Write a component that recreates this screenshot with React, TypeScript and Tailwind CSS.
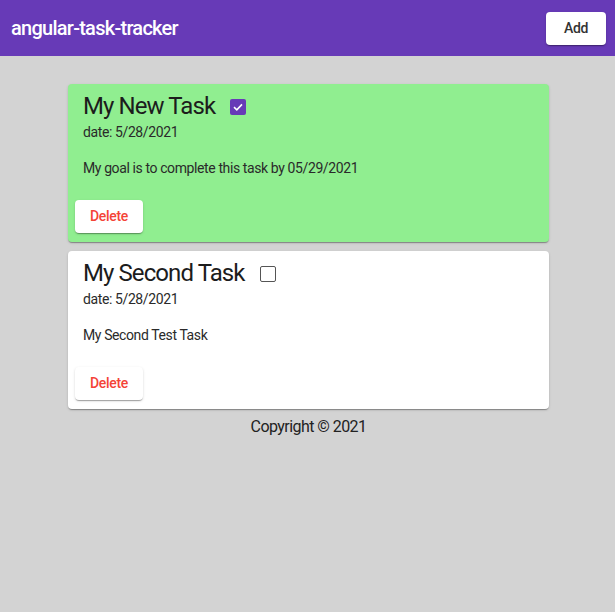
import React from "react";

const shadow =
  "shadow-[0_2px_1px_-1px_rgba(0,0,0,0.2),0_1px_1px_0_rgba(0,0,0,0.14),0_1px_3px_0_rgba(0,0,0,0.12)]";

function Check({ checked }: { checked: boolean }) {
  if (checked) {
    return (
      <span className="flex h-[16px] w-[16px] items-center justify-center rounded-[2px] bg-[#673ab7]">
        <svg width="12" height="12" viewBox="0 0 12 12">
          <path d="M2 6.2 L4.8 8.8 L10 3.4" fill="none" stroke="#fff" strokeWidth="1.6" />
        </svg>
      </span>
    );
  }
  return <span className="block h-[16px] w-[16px] rounded-[2px] border-[1.5px] border-[#555] bg-white" />;
}

function Card({ title, text, done }: { title: string; text: string; done: boolean }) {
  return (
    <div
      className={`rounded-[4px] pt-2 pl-[15px] pr-4 pb-[9px] ${shadow} ${done ? "bg-[#90ee90]" : "bg-white"}`}
    >
      <div className="flex items-center gap-[15px]">
        <h2 className="text-[24px] leading-[28px] font-normal tracking-[-0.038em] text-[#1c1c1c]">{title}</h2>
        <span className="mt-[2px]">
          <Check checked={done} />
        </span>
      </div>
      <div className="mt-[2px] text-[14px] leading-[20px] tracking-[-0.028em] text-[#2a2a2a]">date: 5/28/2021</div>
      <p className="mt-[16px] text-[14px] leading-[20px] tracking-[-0.028em] text-[#2a2a2a]">{text}</p>
      <button
        className={`-ml-2 mt-[22px] h-[33px] w-[68px] rounded-[4px] bg-white text-[14px] font-medium tracking-[-0.02em] text-[#f44336] ${shadow}`}
      >
        Delete
      </button>
    </div>
  );
}

export default function App() {
  return (
    <div className="min-h-[612px] bg-[#d3d3d3] font-['Roboto',sans-serif] tracking-[-0.035em]">
      <header className="flex h-14 items-center justify-between bg-[#673ab7] pl-[11px] pr-[9px]">
        <h1 className="text-[20px] font-medium tracking-[-0.037em] text-white">angular-task-tracker</h1>
        <button
          className={`h-[33px] w-[60px] rounded-[4px] bg-white text-[14px] font-medium tracking-[-0.02em] text-[#333] ${shadow}`}
        >
          Add
        </button>
      </header>
      <main className="ml-[68px] w-[481px] pt-[28px]">
        <div className="flex flex-col gap-[9px]">
          <Card title="My New Task" text="My goal is to complete this task by 05/29/2021" done={true} />
          <Card title="My Second Task" text="My Second Test Task" done={false} />
        </div>
        <p className="mt-[6px] text-center text-[16px] leading-[24px] text-[#222]">Copyright © 2021</p>
      </main>
    </div>
  );
}
